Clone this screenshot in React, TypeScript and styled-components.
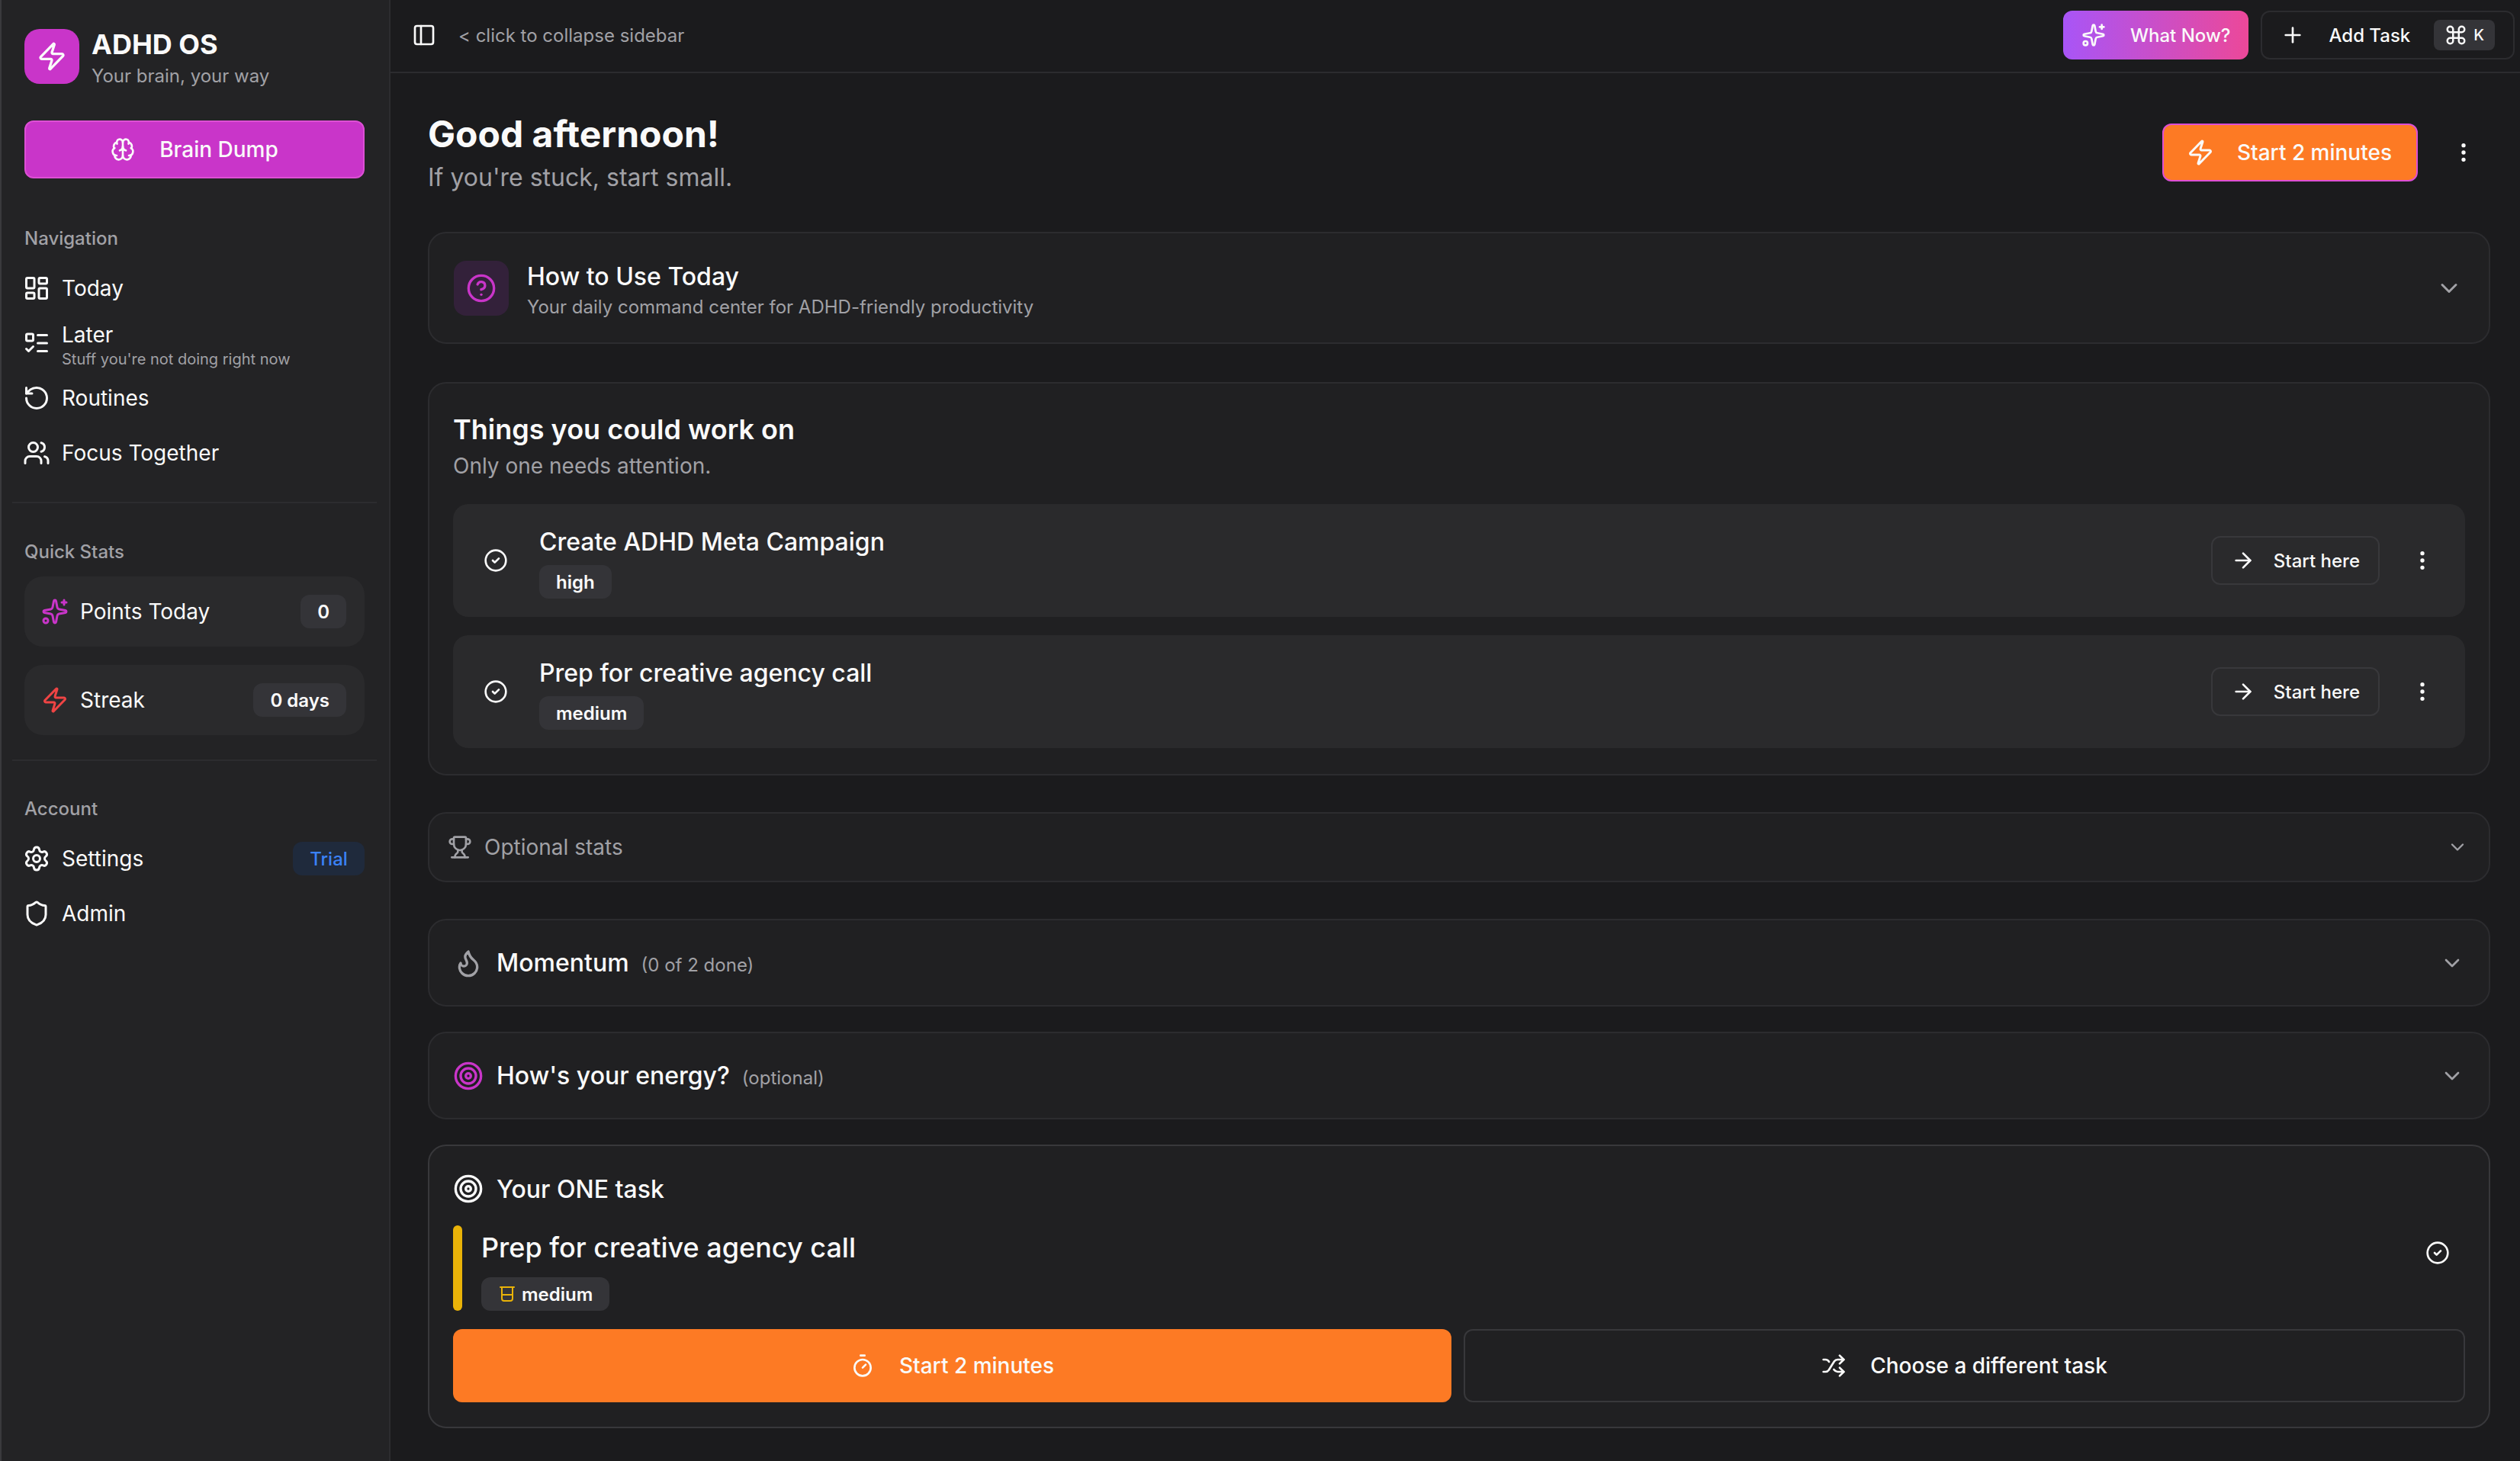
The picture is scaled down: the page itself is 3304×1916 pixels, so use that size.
import React from 'react'
import styled, { createGlobalStyle } from 'styled-components'
import {
  ArrowRight,
  Brain,
  ChevronDown,
  CircleCheck,
  CircleHelp,
  Command,
  EllipsisVertical,
  Flame,
  LayoutDashboard,
  ListTodo,
  PanelLeft,
  Plus,
  RotateCcw,
  Settings,
  Shield,
  Shuffle,
  Sparkles,
  Target,
  Timer,
  Trophy,
  Users,
  Zap,
} from 'lucide-react'

const Colors = {
  Page: '#1b1b1d',
  Sidebar: '#232325',
  Card: '#202022',
  Row: '#2a2a2c',
  Chip: '#343438',
  Line: '#2c2c2f',
  LineStrong: '#38383b',
  Text: '#fafafa',
  Muted: '#a1a1a6',
  Magenta: '#c935c9',
  MagentaEdge: '#dd4fd5',
  Orange: '#fd7a24',
  Red: '#ef4444',
  Blue: '#3b82f6',
  Yellow: '#eab308',
}

const GlobalStyle = createGlobalStyle`
  html, body {
    margin: 0;
    padding: 0;
    background: ${Colors.Page};
  }
  body {
    font-family: Inter, "Liberation Sans", sans-serif;
    color: ${Colors.Text};
    -webkit-font-smoothing: antialiased;
  }
  * {
    box-sizing: border-box;
  }
`

const Layout = styled.div`
  display: flex;
  width: 3304px;
  height: 1916px;
  overflow: hidden;
`

const Sidebar = styled.aside`
  flex: 0 0 512px;
  padding: 36px 32px 0 30px;
  background: ${Colors.Sidebar};
  border-left: 2px solid #3a3a3d;
  border-right: 2px solid ${Colors.Line};
`

const Brand = styled.div`
  display: flex;
  align-items: flex-start;
  gap: 16px;
`

const BrandMark = styled.div`
  display: flex;
  align-items: center;
  justify-content: center;
  width: 72px;
  height: 72px;
  margin-top: 2px;
  border-radius: 20px;
  background: ${Colors.Magenta};
`

const BrandName = styled.div`
  font-size: 36px;
  line-height: 44px;
  font-weight: 700;
`

const BrandTag = styled.div`
  font-size: 24px;
  line-height: 40px;
  color: ${Colors.Muted};
`

const BrainDump = styled.button`
  display: flex;
  align-items: center;
  justify-content: center;
  gap: 32px;
  width: 100%;
  height: 76px;
  margin-top: 38px;
  border: 2px solid ${Colors.MagentaEdge};
  border-radius: 12px;
  background: ${Colors.Magenta};
  color: ${Colors.Text};
  font: 500 28px Inter, sans-serif;
`

const SectionLabel = styled.div<{ $top: number; $bottom?: number }>`
  height: 32px;
  margin-top: ${(p) => p.$top}px;
  margin-bottom: ${(p) => p.$bottom ?? 13}px;
  font-size: 24px;
  line-height: 32px;
  font-weight: 500;
  color: ${Colors.Muted};
`

const NavItem = styled.div`
  display: flex;
  align-items: center;
  gap: 15px;
  height: 72px;
  margin-left: -2px;
  font-size: 28px;
`

const NavText = styled.div`
  flex: 1;
`

const LaterStack = styled.div`
  padding-top: 6px;
  line-height: 36px;
`

const NavHint = styled.div`
  font-size: 20px;
  line-height: 28px;
  color: ${Colors.Muted};
`

const Divider = styled.div<{ $top: number }>`
  height: 2px;
  margin: ${(p) => p.$top}px -16px 0;
  background: ${Colors.Line};
`

const StatCard = styled.div`
  display: flex;
  align-items: center;
  gap: 15px;
  height: 92px;
  margin-bottom: 24px;
  padding: 0 24px 0 22px;
  border-radius: 24px;
  background: ${Colors.Row};
  font-size: 28px;
`

const Chip = styled.span`
  display: inline-flex;
  align-items: center;
  gap: 7px;
  height: 44px;
  padding: 0 22px;
  border-radius: 12px;
  background: ${Colors.Chip};
  color: ${Colors.Text};
  font-size: 24px;
  font-weight: 600;
`

const TrialBadge = styled.span`
  display: inline-flex;
  align-items: center;
  justify-content: center;
  width: 94px;
  height: 44px;
  border-radius: 12px;
  background: #1f2a3c;
  color: ${Colors.Blue};
  font-size: 24px;
  font-weight: 500;
`

const Main = styled.main`
  flex: 1;
  min-width: 0;
`

const TopBar = styled.header`
  display: flex;
  align-items: center;
  height: 96px;
  padding: 0 7px 2px 28px;
  border-bottom: 2px solid ${Colors.Line};
`

const CollapseHint = styled.span`
  margin-left: 29px;
  flex: 1;
  font-size: 24px;
  color: ${Colors.Muted};
`

const WhatNow = styled.button`
  display: flex;
  align-items: center;
  gap: 32px;
  height: 64px;
  padding: 0 24px;
  border: 0;
  border-radius: 12px;
  background: linear-gradient(to right, #a855f7, #ec4899);
  color: ${Colors.Text};
  font: 500 24px Inter, sans-serif;
`

const AddTask = styled.button`
  display: flex;
  align-items: center;
  height: 64px;
  margin-left: 16px;
  padding: 0 24px;
  border: 2px solid ${Colors.Line};
  border-radius: 12px;
  background: transparent;
  color: ${Colors.Text};
  font: 500 24px Inter, sans-serif;
`

const AddTaskLabel = styled.span`
  margin: 0 31px;
`

const Kbd = styled.span`
  display: flex;
  align-items: center;
  gap: 8px;
  height: 40px;
  padding: 0 14px 0 14px;
  border-radius: 8px;
  background: ${Colors.Chip};
  font-size: 20px;
`

const Content = styled.div`
  padding: 0 39px 0 49px;
`

const Hero = styled.div`
  display: flex;
  align-items: center;
  height: 208px;
`

const HeroText = styled.div`
  flex: 1;
`

const Greeting = styled.h1`
  margin: 0 0 5px;
  font-size: 48px;
  line-height: 60px;
  font-weight: 700;
`

const GreetingSub = styled.p`
  margin: 0;
  font-size: 32px;
  line-height: 44px;
  color: ${Colors.Muted};
`

const HeroButton = styled.button`
  display: flex;
  align-items: center;
  gap: 30px;
  height: 76px;
  padding: 0 32px 0 30px;
  border: 2px solid ${Colors.MagentaEdge};
  border-radius: 12px;
  background: ${Colors.Orange};
  color: ${Colors.Text};
  font: 500 28px Inter, sans-serif;
`

const HeroMenu = styled.div`
  display: flex;
  margin: 0 19px 0 44px;
  color: ${Colors.Text};
`

const Card = styled.section<{ $top?: number; $height?: number; $strong?: boolean }>`
  margin-top: ${(p) => p.$top ?? 0}px;
  height: ${(p) => (p.$height ? `${p.$height}px` : 'auto')};
  border: 2px solid ${(p) => (p.$strong ? Colors.LineStrong : Colors.Line)};
  border-radius: 24px;
  background: ${Colors.Card};
`

const Collapsed = styled(Card)<{ $left: number; $right: number; $gap: number }>`
  display: flex;
  align-items: center;
  gap: ${(p) => p.$gap}px;
  padding: 0 ${(p) => p.$right}px 0 ${(p) => p.$left}px;
`

const HelpIcon = styled.div`
  display: flex;
  flex: 0 0 72px;
  align-items: center;
  justify-content: center;
  height: 72px;
  border-radius: 16px;
  background: #33213a;
  color: ${Colors.Magenta};
`

const Grow = styled.div`
  flex: 1;
  display: flex;
  align-items: baseline;
  gap: 16px;
`

const Stack = styled.div`
  flex: 1;
`

const HelpTitle = styled.div`
  margin-top: 10px;
  font-size: 32px;
  line-height: 40px;
  font-weight: 500;
`

const HelpSub = styled.div`
  font-size: 24px;
  line-height: 40px;
  color: ${Colors.Muted};
`

const StatsLabel = styled.span`
  font-size: 28px;
  color: ${Colors.Muted};
`

const SectionTitle = styled.span`
  font-size: 32px;
  font-weight: 500;
`

const SectionNote = styled.span`
  font-size: 24px;
  color: ${Colors.Muted};
`

const WorkCard = styled(Card)`
  padding: 38px 31px 34px;
`

const WorkTitle = styled.h2`
  margin: 0;
  font-size: 36px;
  line-height: 44px;
  font-weight: 600;
`

const WorkSub = styled.p`
  margin: 4px 0 28px;
  font-size: 28px;
  line-height: 44px;
  color: ${Colors.Muted};
`

const TaskRow = styled.div`
  display: flex;
  align-items: center;
  height: 148px;
  margin-top: 24px;
  padding: 0 40px;
  border-radius: 20px;
  background: ${Colors.Row};
`

const TaskBody = styled.div`
  flex: 1;
  padding: 4px 0 0 41px;
`

const TaskName = styled.div`
  margin-bottom: 8px;
  font-size: 32px;
  line-height: 44px;
  font-weight: 500;
`

const StartHere = styled.button`
  display: flex;
  align-items: center;
  gap: 24px;
  height: 64px;
  margin-right: 40px;
  padding: 0 24px;
  border: 2px solid ${Colors.LineStrong};
  border-radius: 12px;
  background: transparent;
  color: ${Colors.Text};
  font: 500 24px Inter, sans-serif;
`

const OneCard = styled(Card)`
  padding: 0 31px;
`

const OneHeader = styled.div`
  display: flex;
  align-items: center;
  gap: 17px;
  height: 104px;
  padding-top: 8px;
  font-size: 32px;
  font-weight: 500;
`

const OneTask = styled.div`
  display: flex;
  align-items: center;
  gap: 25px;
  height: 112px;
  padding-right: 20px;
`

const AccentBar = styled.div`
  flex: 0 0 12px;
  align-self: stretch;
  border-radius: 6px;
  background: ${Colors.Yellow};
`

const OneName = styled.div`
  margin-bottom: 10px;
  font-size: 36px;
  line-height: 58px;
  font-weight: 500;
`

const OneCheck = styled(CircleCheck)`
  align-self: flex-start;
  margin-top: 20px;
`

const ActionRow = styled.div`
  display: flex;
  gap: 16px;
  margin-top: 24px;
`

const Action = styled.button<{ $primary?: boolean }>`
  flex: 1;
  display: flex;
  align-items: center;
  justify-content: center;
  gap: 32px;
  height: 96px;
  border: ${(p) => (p.$primary ? '0' : `2px solid ${Colors.LineStrong}`)};
  border-radius: 12px;
  background: ${(p) => (p.$primary ? Colors.Orange : 'transparent')};
  color: ${Colors.Text};
  font: 500 28px Inter, sans-serif;
`

function LevelIcon() {
  return (
    <svg width="24" height="24" viewBox="0 0 24 24" fill="none" stroke={Colors.Yellow} strokeWidth="2" strokeLinecap="round">
      <path d="M3 3h18" />
      <path d="M5 3v15a3 3 0 0 0 3 3h8a3 3 0 0 0 3-3V3" />
      <path d="M5 13h14" />
    </svg>
  )
}

const tasks = [
  { name: 'Create ADHD Meta Campaign', level: 'high' },
  { name: 'Prep for creative agency call', level: 'medium' },
]

export default function App() {
  return (
    <>
      <GlobalStyle />
      <Layout>
        <Sidebar>
          <Brand>
            <BrandMark>
              <Zap size={40} color={Colors.Text} />
            </BrandMark>
            <div>
              <BrandName>ADHD OS</BrandName>
              <BrandTag>Your brain, your way</BrandTag>
            </div>
          </Brand>
          <BrainDump>
            <Brain size={32} />
            Brain Dump
          </BrainDump>

          <SectionLabel $top={63}>Navigation</SectionLabel>
          <NavItem>
            <LayoutDashboard size={36} />
            Today
          </NavItem>
          <NavItem>
            <ListTodo size={36} />
            <LaterStack>
              Later
              <NavHint>Stuff you're not doing right now</NavHint>
            </LaterStack>
          </NavItem>
          <NavItem>
            <RotateCcw size={36} />
            Routines
          </NavItem>
          <NavItem>
            <Users size={36} />
            Focus Together
          </NavItem>
          <Divider $top={28} />

          <SectionLabel $top={48} $bottom={16}>Quick Stats</SectionLabel>
          <StatCard>
            <Sparkles size={36} color={Colors.Magenta} />
            <NavText>Points Today</NavText>
            <Chip>0</Chip>
          </StatCard>
          <StatCard>
            <Zap size={36} color={Colors.Red} />
            <NavText>Streak</NavText>
            <Chip>0 days</Chip>
          </StatCard>
          <Divider $top={32} />

          <SectionLabel $top={47}>Account</SectionLabel>
          <NavItem>
            <Settings size={36} />
            <NavText>Settings</NavText>
            <TrialBadge>Trial</TrialBadge>
          </NavItem>
          <NavItem>
            <Shield size={36} />
            Admin
          </NavItem>
        </Sidebar>

        <Main>
          <TopBar>
            <PanelLeft size={32} />
            <CollapseHint>&lt; click to collapse sidebar</CollapseHint>
            <WhatNow>
              <Sparkles size={32} />
              What Now?
            </WhatNow>
            <AddTask>
              <Plus size={32} />
              <AddTaskLabel>Add Task</AddTaskLabel>
              <Kbd>
                <Command size={30} />K
              </Kbd>
            </AddTask>
          </TopBar>

          <Content>
            <Hero>
              <HeroText>
                <Greeting>Good afternoon!</Greeting>
                <GreetingSub>If you're stuck, start small.</GreetingSub>
              </HeroText>
              <HeroButton>
                <Zap size={36} />
                Start 2 minutes
              </HeroButton>
              <HeroMenu>
                <EllipsisVertical size={32} />
              </HeroMenu>
            </Hero>

            <Collapsed $height={147} $left={32} $right={34} $gap={24}>
              <HelpIcon>
                <CircleHelp size={40} />
              </HelpIcon>
              <Stack>
                <HelpTitle>How to Use Today</HelpTitle>
                <HelpSub>Your daily command center for ADHD-friendly productivity</HelpSub>
              </Stack>
              <ChevronDown size={36} color={Colors.Muted} />
            </Collapsed>

            <WorkCard $top={50}>
              <WorkTitle>Things you could work on</WorkTitle>
              <WorkSub>Only one needs attention.</WorkSub>
              {tasks.map((task) => (
                <TaskRow key={task.name}>
                  <CircleCheck size={32} />
                  <TaskBody>
                    <TaskName>{task.name}</TaskName>
                    <Chip>{task.level}</Chip>
                  </TaskBody>
                  <StartHere>
                    <ArrowRight size={32} />
                    Start here
                  </StartHere>
                  <EllipsisVertical size={32} />
                </TaskRow>
              ))}
            </WorkCard>

            <Collapsed $top={48} $height={92} $left={24} $right={27} $gap={16}>
              <Trophy size={32} color={Colors.Muted} />
              <Stack>
                <StatsLabel>Optional stats</StatsLabel>
              </Stack>
              <ChevronDown size={28} color={Colors.Muted} />
            </Collapsed>

            <Collapsed $top={48} $height={115} $left={31} $right={32} $gap={17}>
              <Flame size={40} color={Colors.Muted} />
              <Grow>
                <SectionTitle>Momentum</SectionTitle>
                <SectionNote>(0 of 2 done)</SectionNote>
              </Grow>
              <ChevronDown size={32} color={Colors.Muted} />
            </Collapsed>

            <Collapsed $top={33} $height={115} $left={31} $right={32} $gap={17}>
              <Target size={40} color={Colors.Magenta} />
              <Grow>
                <SectionTitle>How's your energy?</SectionTitle>
                <SectionNote>(optional)</SectionNote>
              </Grow>
              <ChevronDown size={32} color={Colors.Muted} />
            </Collapsed>

            <OneCard $top={33} $height={372} $strong>
              <OneHeader>
                <Target size={40} />
                Your ONE task
              </OneHeader>
              <OneTask>
                <AccentBar />
                <Stack>
                  <OneName>Prep for creative agency call</OneName>
                  <Chip>
                    <LevelIcon />
                    medium
                  </Chip>
                </Stack>
                <OneCheck size={32} />
              </OneTask>
              <ActionRow>
                <Action $primary>
                  <Timer size={32} />
                  Start 2 minutes
                </Action>
                <Action>
                  <Shuffle size={32} />
                  Choose a different task
                </Action>
              </ActionRow>
            </OneCard>
          </Content>
        </Main>
      </Layout>
    </>
  )
}
